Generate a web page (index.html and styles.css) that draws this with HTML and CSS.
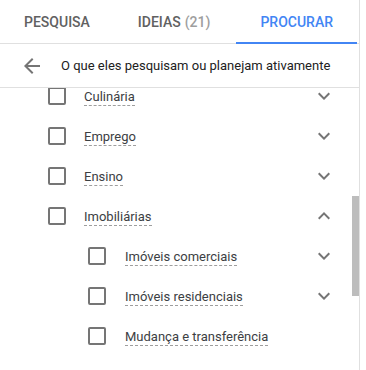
FILE: index.html
```html
<!DOCTYPE html>
<html lang="pt">
<head>
<meta charset="utf-8">
<link rel="stylesheet" href="styles.css">
</head>
<body>
<div class="panel">
  <div class="tabs">
    <div class="tab">PESQUISA</div>
    <div class="tab">IDEIAS <span class="count">(21)</span></div>
    <div class="tab active">PROCURAR</div>
  </div>
  <div class="back-row">
    <svg class="back-icon" viewBox="0 0 24 24" width="24" height="24"><path d="M20 11H7.83l5.59-5.59L12 4l-8 8 8 8 1.41-1.41L7.83 13H20v-2z"/></svg>
    <span class="back-text">O que eles pesquisam ou planejam ativamente</span>
  </div>
  <div class="scroll">
    <ul class="list">
      <li class="row"><span class="cb"></span><span class="label">Culinária</span><svg class="chev" viewBox="0 0 24 24" width="24" height="24"><path d="M16.59 8.59L12 13.17 7.41 8.59 6 10l6 6 6-6z"/></svg></li>
      <li class="row"><span class="cb"></span><span class="label">Emprego</span><svg class="chev" viewBox="0 0 24 24" width="24" height="24"><path d="M16.59 8.59L12 13.17 7.41 8.59 6 10l6 6 6-6z"/></svg></li>
      <li class="row"><span class="cb"></span><span class="label">Ensino</span><svg class="chev" viewBox="0 0 24 24" width="24" height="24"><path d="M16.59 8.59L12 13.17 7.41 8.59 6 10l6 6 6-6z"/></svg></li>
      <li class="row"><span class="cb"></span><span class="label">Imobiliárias</span><svg class="chev" viewBox="0 0 24 24" width="24" height="24"><path d="M12 8l-6 6 1.41 1.41L12 10.83l4.59 4.58L18 14z"/></svg></li>
      <li class="row sub"><span class="cb"></span><span class="label">Imóveis comerciais</span><svg class="chev" viewBox="0 0 24 24" width="24" height="24"><path d="M16.59 8.59L12 13.17 7.41 8.59 6 10l6 6 6-6z"/></svg></li>
      <li class="row sub"><span class="cb"></span><span class="label">Imóveis residenciais</span><svg class="chev" viewBox="0 0 24 24" width="24" height="24"><path d="M16.59 8.59L12 13.17 7.41 8.59 6 10l6 6 6-6z"/></svg></li>
      <li class="row sub"><span class="cb"></span><span class="label">Mudança e transferência</span></li>
    </ul>
    <div class="thumb"></div>
  </div>
</div>
</body>
</html>
```

FILE: styles.css
```css
html, body {
  margin: 0;
  padding: 0;
  background: #fff;
}
body {
  font-family: Roboto, "Liberation Sans", sans-serif;
  color: #3c4043;
}
.panel {
  width: 359px;
  height: 370px;
  border-right: 1px solid #e0e0e0;
  display: flex;
  flex-direction: column;
  overflow: hidden;
}
.tabs {
  display: flex;
  height: 43px;
  border-bottom: 1px solid #e0e0e0;
  flex: none;
}
.tab {
  position: relative;
  padding: 0 24px;
  display: flex;
  align-items: center;
  font-size: 14px;
  font-weight: 500;
  color: #616161;
}
.tab .count {
  color: #9e9e9e;
  margin-left: 4px;
}
.tab.active {
  color: #4285f4;
  margin-left: 2px;
}
.tab.active::after {
  content: "";
  position: absolute;
  left: 0;
  right: 0;
  bottom: -1px;
  height: 2px;
  background: #4285f4;
}
.back-row {
  display: flex;
  align-items: center;
  height: 43px;
  border-bottom: 1px solid #e0e0e0;
  flex: none;
  padding-left: 20px;
}
.back-icon {
  fill: #757575;
  flex: none;
}
.back-text {
  margin-left: 17px;
  font-size: 13px;
  color: #212121;
}
.scroll {
  position: relative;
  flex: 1;
  overflow: hidden;
}
.list {
  list-style: none;
  margin: -12px 0 0 0;
  padding: 0;
}
.row {
  display: flex;
  align-items: center;
  height: 40px;
  padding-left: 48px;
  padding-right: 23px;
}
.row.sub {
  padding-left: 88px;
}
.cb {
  width: 14px;
  height: 14px;
  border: 2px solid #757575;
  border-radius: 2px;
  flex: none;
}
.label {
  margin-left: 18px;
  font-size: 13px;
  color: #3c4043;
  line-height: 15px;
  border-bottom: 1px dashed #9e9e9e;
  padding-bottom: 1px;
  margin-top: 2px;
}
.row.sub .label {
  margin-left: 19px;
}
.chev {
  margin-left: auto;
  fill: #757575;
  flex: none;
}
.thumb {
  position: absolute;
  right: 0;
  top: 108px;
  width: 7px;
  height: 100px;
  background: #bdbdbd;
}
```
